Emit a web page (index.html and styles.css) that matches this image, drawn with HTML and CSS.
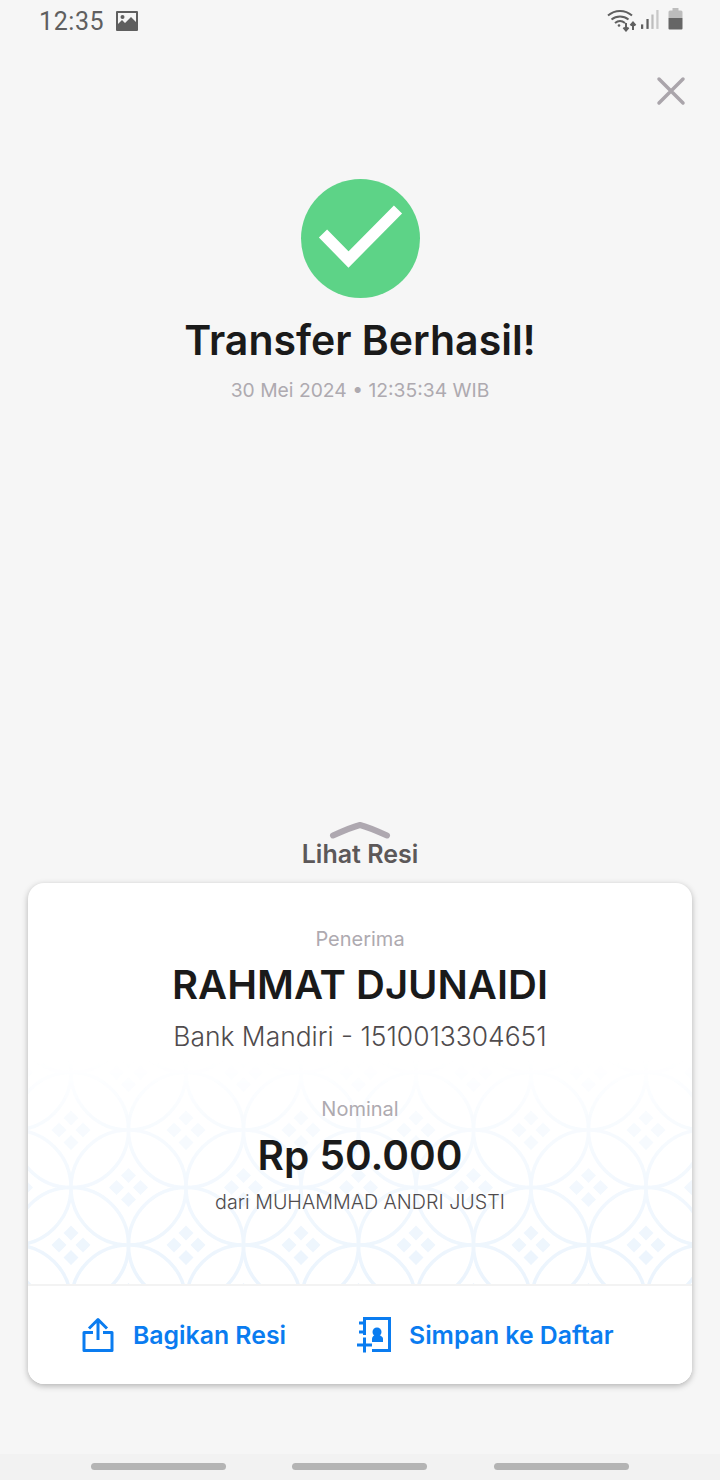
FILE: index.html
```html
<!DOCTYPE html>
<html lang="id">
<head>
<meta charset="utf-8">
<title>Transfer Berhasil</title>
<link rel="stylesheet" href="styles.css">
</head>
<body>
<div class="page">
  <header class="status">
    <div class="status-left">
      <span class="clock">12:35</span>
      <svg class="pic" width="22" height="20" viewBox="0 0 22 20"><path fill="#5f5f5f" fill-rule="evenodd" d="M1 0h20a1 1 0 0 1 1 1v18a1 1 0 0 1-1 1H1a1 1 0 0 1-1-1V1a1 1 0 0 1 1-1zm1 2v11l4-4 3 3 6-6 5 5V2z"/><circle cx="6.500" cy="6" r="2" fill="#5f5f5f"/></svg>
    </div>
    <div class="status-right">
      <svg width="30" height="24" viewBox="0 0 30 24" fill="none" stroke="#5f5f5f"><path stroke-width="2" d="M1 7.500C8 1.500 18 1.500 25 7.500M4.500 11.500c5-4 12-4 17 0M8 15c3-2.500 7-2.500 10 0"/><circle cx="12" cy="17.500" r="1.300" fill="#5f5f5f" stroke="none"/><path stroke-width="2" d="M19 15v7M16.500 19.500l2.500 3 2.500-3M26 22v-7M23.500 17.500l2.500-3 2.500 3"/></svg>
      <svg class="signal" width="18" height="22" viewBox="0 0 20 22"><rect x="0" y="17" width="2.500" height="5" fill="#5f5f5f"/><rect x="6" y="11" width="2.500" height="11" fill="#5f5f5f"/><rect x="11.500" y="6" width="2.500" height="16" fill="#bdbdbd"/><rect x="17" y="1" width="2.500" height="21" fill="#c9c9c9"/></svg>
      <svg class="battery" width="15" height="22" viewBox="0 0 15 22"><path fill="#bdbdbd" d="M4.500 0h6v2.500H13a1.500 1.500 0 0 1 1.500 1.500v6H.5V4A1.500 1.500 0 0 1 2 2.500h2.500z"/><path fill="#666" d="M.5 10h14v10.500a1 1 0 0 1-1 1h-12a1 1 0 0 1-1-1z"/></svg>
    </div>
  </header>

  <div class="close-row">
    <svg width="30" height="30" viewBox="0 0 30 30" stroke="#aaa5ab" stroke-width="3.500" stroke-linecap="round"><path d="M3 3l24 24M27 3L3 27"/></svg>
  </div>

  <section class="hero">
    <svg class="check" width="119" height="119" viewBox="0 0 119 119"><circle cx="59.500" cy="59.500" r="59.500" fill="#5dd387"/><path d="M22 54.500l25.500 26L97 30.500" fill="none" stroke="#fff" stroke-width="11.500"/></svg>
    <h1 class="title">Transfer Berhasil!</h1>
    <p class="date">30 Mei 2024 • 12:35:34 WIB</p>
  </section>

  <section class="receipt-toggle">
    <svg width="62" height="18" viewBox="0 0 62 18" fill="none" stroke="#aea8b0" stroke-width="6" stroke-linecap="round" stroke-linejoin="round"><path d="M4 14.500C14 10 23 6 31 4c8 2 17 6 27 10.500"/></svg>
    <span class="toggle-label">Lihat Resi</span>
  </section>

  <section class="card">
    <div class="card-body">
      <svg class="batik" width="664" height="224" aria-hidden="true">
        <defs>
          <pattern id="kawung" x="43" y="70" width="115" height="115" patternUnits="userSpaceOnUse">
            <g fill="none" stroke="#ebf4fd" stroke-width="3.500">
              <circle cx="0" cy="0" r="57.500"/><circle cx="115" cy="0" r="57.500"/><circle cx="0" cy="115" r="57.500"/><circle cx="115" cy="115" r="57.500"/><circle cx="57.500" cy="57.500" r="57.500"/>
            </g>
            <g fill="#ebf4fd">
              <path d="M0 5l7.500 7.500-7.500 7.500-7.500-7.500zM12-7.500l7.500 7.500-7.500 7.500-7.500-7.500z"/>
              <path d="M115 5l7.500 7.500-7.500 7.500-7.500-7.500zM103-7.500l7.500 7.500-7.500 7.500-7.500-7.500z"/>
              <path d="M0 95.500l7.500 7.500-7.500 7.500-7.500-7.500zM12 107.500l7.500 7.500-7.500 7.500-7.500-7.500z"/>
              <path d="M115 95.500l7.500 7.500-7.500 7.500-7.500-7.500zM103 107.500l7.500 7.500-7.500 7.500-7.500-7.500z"/>
              <path d="M57.500 38l7.500 7.500-7.500 7.500-7.500-7.500zM57.500 62l7.500 7.500-7.500 7.500-7.500-7.500zM45.500 50l7.500 7.500-7.500 7.500-7.500-7.500zM69.500 50l7.500 7.500-7.500 7.500-7.500-7.500z"/>
            </g>
          </pattern>
          <linearGradient id="fade" x1="0" y1="0" x2="0" y2="1"><stop offset="0" stop-color="#fff" stop-opacity="0"/><stop offset=".3" stop-color="#fff" stop-opacity=".4"/><stop offset="1" stop-color="#fff"/></linearGradient>
          <mask id="fade-mask"><rect width="664" height="224" fill="url(#fade)"/></mask>
        </defs>
        <rect width="664" height="224" fill="url(#kawung)" mask="url(#fade-mask)"/>
      </svg>
      <div class="block recipient">
        <span class="label">Penerima</span>
        <strong class="name">RAHMAT DJUNAIDI</strong>
        <span class="account">Bank Mandiri - 1510013304651</span>
      </div>
      <div class="block amount-block">
        <span class="label">Nominal</span>
        <strong class="amount">Rp 50.000</strong>
        <span class="sender">dari MUHAMMAD ANDRI JUSTI</span>
      </div>
    </div>
    <footer class="actions">
      <div class="action action-share">
        <svg width="34" height="36" viewBox="0 0 34 36" fill="none" stroke="#0a7cf0" stroke-width="3" stroke-linejoin="round"><path d="M12 15.500H3v18h28v-18h-9"/><path d="M17 23V3M8 11.500L17 2.500l9 9"/></svg>
        <span>Bagikan Resi</span>
      </div>
      <div class="action action-save">
        <svg width="34" height="36" viewBox="0 0 34 36" fill="none" stroke="#0a7cf0" stroke-width="3"><path d="M7.500 18V1.500H32.500V33.500H15"/><path d="M2 6h5.500M2 15h5.500M0 28h15M7.500 20.500v15"/><circle cx="20" cy="15" r="4.500" fill="#0a7cf0" stroke="none"/><path d="M15 25v-3c0-2.500 2-4 5-4s6 1.500 6 4v3z" fill="#0a7cf0" stroke="none"/></svg>
        <span>Simpan ke Daftar</span>
      </div>
    </footer>
  </section>

  <nav class="navbar">
    <span class="pill"></span><span class="pill"></span><span class="pill"></span>
  </nav>
</div>
</body>
</html>
```
FILE: styles.css
```css
* { box-sizing: border-box; }
html, body { margin: 0; padding: 0; }
body { background: #f6f6f6; font-family: Inter, "Liberation Sans", sans-serif; }
.page { width: 720px; height: 1480px; display: flex; flex-direction: column; overflow: hidden; }

.status { height: 42px; padding: 6px 37px 0 39px; display: flex; justify-content: space-between; align-items: flex-start; }
.status-left { display: flex; align-items: center; gap: 12px; height: 30px; }
.clock { font-family: Roboto, sans-serif; font-size: 25px; color: #5f5f5f; letter-spacing: 0.6px; }
.status-right { display: flex; align-items: flex-start; gap: 4px; padding-top: 2px; }
.battery { margin-left: 5px; }

.close-row { height: 34px; margin-top: 34px; padding-right: 34px; display: flex; justify-content: flex-end; }

.hero { margin-top: 69px; display: flex; flex-direction: column; align-items: center; }
.check { display: block; }
.title { margin: 18px 0 0; font-size: 41px; line-height: 48px; font-weight: 600; color: #1a1a1a; }
.date { margin: 13px 0 0; font-size: 19.3px; line-height: 26px; color: #aeaab0; }

.receipt-toggle { margin-top: 418px; display: flex; flex-direction: column; align-items: center; }
.toggle-label { font-size: 25px; line-height: 30px; font-weight: 600; color: #5c5859; }

.card { margin: 14px 28px 0; height: 501px; background: #fff; border-radius: 16px; box-shadow: 0 2px 6px rgba(0,0,0,.28); overflow: hidden; display: flex; flex-direction: column; }
.card-body { position: relative; height: 401px; padding-top: 43px; }
.batik { position: absolute; left: 0; bottom: 0; display: block; }
.block { position: relative; display: flex; flex-direction: column; align-items: center; }
.label { font-size: 20px; line-height: 26px; color: #aeaab0; }
.name { margin-top: 8px; font-size: 40px; line-height: 50px; font-weight: 600; color: #1a1a1a; }
.account { margin-top: 9px; font-size: 26.4px; line-height: 34px; font-weight: 300; color: #4f4b4d; }
.amount-block { margin-top: 43px; }
.amount { margin-top: 9px; font-size: 40.5px; line-height: 50px; font-weight: 600; color: #1a1a1a; }
.sender { margin-top: 8px; font-size: 19.7px; line-height: 26px; font-weight: 300; color: #4f4b4d; }

.actions { flex: 1; border-top: 2px solid #f3f3f3; display: flex; align-items: center; padding-left: 53px; background: #fff; }
.action { display: flex; align-items: center; gap: 18px; font-size: 24.8px; font-weight: 600; color: #0a7cf0; }
.action-save { margin-left: 71px; }

.navbar { margin-top: auto; height: 26px; background: #f2f2f2; padding: 9px 91px 0; display: flex; gap: 66px; align-items: flex-start; }
.pill { width: 135px; height: 7px; border-radius: 4px; background: #b4b4b4; flex: none; }
.pill:last-child { margin-left: 1px; }
```
